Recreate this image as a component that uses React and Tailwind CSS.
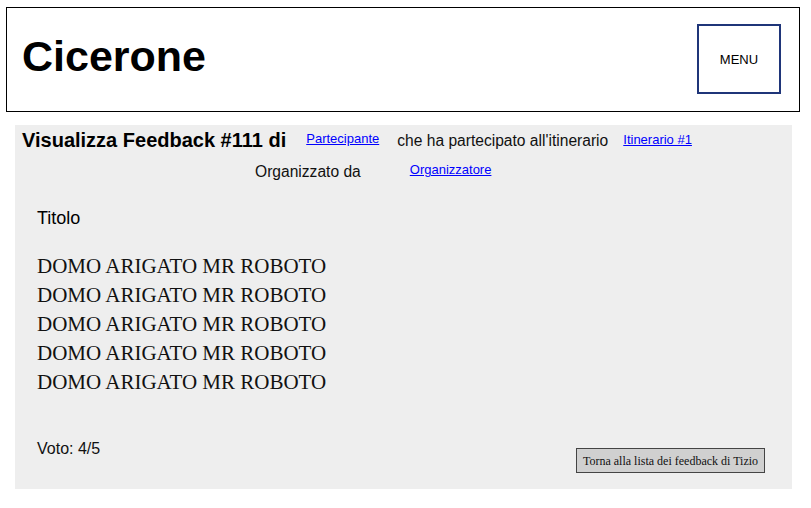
export default function App() {
  const lines = Array.from({ length: 5 }, () => 'DOMO ARIGATO MR ROBOTO')

  return (
    <div className="w-[811px] h-[508px] bg-white overflow-hidden font-['Liberation_Sans',Arial,sans-serif] text-black">
      <header className="ml-[6px] mt-[7px] w-[794px] h-[105px] border border-black flex items-center justify-between pl-[15px] pr-[18px]">
        <h1 className="text-[43px] font-bold leading-none -mt-[6px]">Cicerone</h1>
        <button className="w-[84px] h-[70px] border-2 border-[#1f3579] bg-white text-[13px] leading-none -mt-[2px]">
          <span className="relative top-[1px]">MENU</span>
        </button>
      </header>

      <main className="ml-[15px] mt-[13px] w-[777px] h-[364px] bg-[#eeeeee] pl-[7px] pt-[3px]">
        <div className="flex items-start">
          <h2 className="text-[20px] leading-[24px] font-bold">Visualizza Feedback #111 di</h2>
          <a href="#" className="ml-[20px] mt-[3px] text-[13px] leading-[16px] text-[#0000ff] underline">
            Partecipante
          </a>
          <span className="ml-[18px] mt-[3px] text-[15.6px] leading-[20px] text-[#111]">
            che ha partecipato all'itinerario
          </span>
          <a href="#" className="ml-[15px] mt-[4px] text-[13px] leading-[16px] text-[#0000ff] underline">
            Itinerario #1
          </a>
        </div>
        <div className="flex items-start mt-[10px] ml-[233px]">
          <span className="text-[15.6px] leading-[20px] text-[#111]">Organizzato da</span>
          <a href="#" className="ml-[49px] text-[13px] leading-[16px] text-[#0000ff] underline">
            Organizzatore
          </a>
        </div>

        <div className="pl-[15px]">
          <p className="mt-[25px] text-[18px] leading-[22px]">Titolo</p>
          <div className="mt-[23px] font-['Liberation_Serif','Times_New_Roman',serif] text-[21px] leading-[29px] text-[#111]">
            {lines.map((l, i) => (
              <p key={i}>{l}</p>
            ))}
          </div>
          <div className="mt-[42px] flex items-start justify-between pr-[27px]">
            <span className="text-[16px] leading-[20px] text-[#111]">Voto: 4/5</span>
            <button className="mt-[9px] w-[189px] h-[25px] bg-[#d0d0d0] border border-[#444] font-['Liberation_Serif','Times_New_Roman',serif] text-[12px] leading-none text-[#111]">
              Torna alla lista dei feedback di Tizio
            </button>
          </div>
        </div>
      </main>
    </div>
  )
}
